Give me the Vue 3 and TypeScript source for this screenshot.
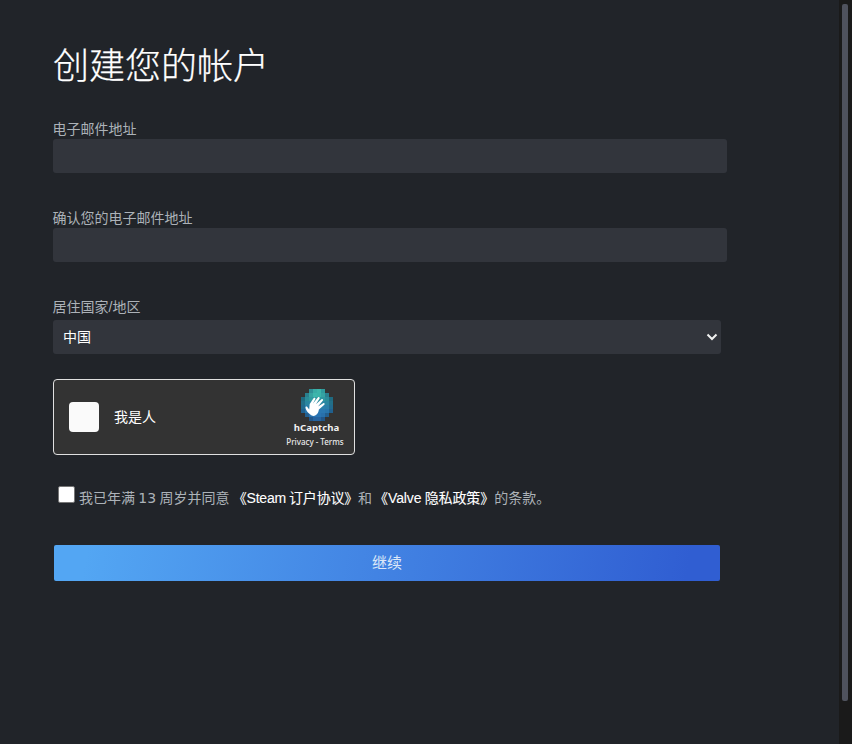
<script setup lang="ts">
const rows: string[][] = [
  ['', '', '#2f8f96', '#38aca6', '#3cb4aa', '#2f9a9c', '', ''],
  ['', '#2a7f8e', '#35a3a2', '#3cb6ac', '#3ab3aa', '#34a3a2', '#2a7f8e', ''],
  ['#1f6a80', '#2b8c98', '#309aa0', '#2f9aa0', '#2f98a0', '#2f98a0', '#2b8c98', '#1f6a80'],
  ['#226f88', '#2a86a0', '#2a88a4', '#2a88a4', '#2a88a4', '#2a88a4', '#2a86a0', '#226f88'],
  ['#216a8e', '#2a7ea8', '#2a80ac', '#2a80ac', '#2a80ac', '#2a80ac', '#2a7ea8', '#216a8e'],
  ['#20608e', '#2875ad', '#2a78b2', '#2a78b2', '#2a78b2', '#2a78b2', '#2875ad', '#20608e'],
  ['', '#235f90', '#2870ac', '#2a74b2', '#2a74b2', '#2870ac', '#235f90', ''],
  ['', '', '#21568a', '#2563a0', '#2563a0', '#21568a', '', ''],
]
const cells = rows.flatMap((r, y) => r.map((fill, x) => ({ x: x * 4, y: y * 4, fill }))).filter((c) => c.fill)
</script>

<template>
  <div class="page">
    <main class="content">
      <h1 class="title">创建您的帐户</h1>

      <label class="field">
        <span class="label">电子邮件地址</span>
        <input class="input" type="text" />
      </label>

      <label class="field second">
        <span class="label">确认您的电子邮件地址</span>
        <input class="input" type="text" />
      </label>

      <label class="field third">
        <span class="label">居住国家/地区</span>
        <div class="select">
          <span>中国</span>
          <svg width="12" height="8" viewBox="0 0 12 8">
            <path d="M1.5 1.5 6 6l4.5-4.5" fill="none" stroke="#f0f0f0" stroke-width="2" />
          </svg>
        </div>
      </label>

      <div class="captcha">
        <div class="box"></div>
        <span class="human">我是人</span>
        <div class="brand">
          <svg class="logo" width="32" height="32" viewBox="0 0 32 32" shape-rendering="crispEdges">
            <rect v-for="c in cells" :key="c.x + '-' + c.y" :x="c.x" :y="c.y" width="4" height="4" :fill="c.fill" />
            <path
              shape-rendering="auto"
              d="M9.5 25.5c-2.6-1.4-4.2-4-5-6.6-.3-1.1 1.1-1.8 1.8-.8l1.9 2.4.5-5.6 4-5.8c.7-1 2.2-.1 1.7 1l-2.4 4.4 5-6.2c.8-.9 2.2.1 1.6 1.2l-3.7 5.8 5.6-5c.9-.8 2.1.4 1.3 1.4l-4.8 5.8 5.2-3.2c1.1-.7 2 .7 1.1 1.5l-5.4 4.8c-.5 2.9-1.3 4.4-2.9 5.4-1.9 1.2-3.6 1.2-5.5.1z"
              fill="#fff"
            />
          </svg>
          <span class="brand-name">hCaptcha</span>
          <span class="brand-links">Privacy - Terms</span>
        </div>
      </div>

      <div class="agree">
        <span class="check"></span>
        <span class="agree-text">我已年满 <span class="num">13</span> 周岁并同意 <span class="link">《Steam 订户协议》</span>和<span class="link second-link">《Valve 隐私政策》</span>的条款。</span>
      </div>

      <button class="continue" type="button">继续</button>
    </main>
    <aside class="scrollbar"><div class="thumb"></div></aside>
  </div>
</template>

<style>
html, body { margin: 0; background: #212429; overflow: hidden; }
</style>

<style scoped>
.page {
  display: flex;
  height: 744px;
  background: #212429;
  font-family: "Liberation Sans", "Noto Sans CJK SC", sans-serif;
  color: #acb2b8;
}
.content {
  flex: 1;
  padding: 43px 0 0 53px;
  box-sizing: border-box;
}
.title {
  margin: 0;
  height: 48px;
  font-size: 36px;
  line-height: 48px;
  font-weight: 300;
  -webkit-text-stroke: 0.25px #fff;
  color: #fff;
}
.field { display: block; width: 674px; margin-top: 29px; }
.field.second { margin-top: 36px; }
.field.third { margin-top: 36px; }
.label { display: block; font-size: 14px; line-height: 19px; margin-left: -0.5px; }
.input {
  display: block;
  width: 100%;
  height: 34px;
  box-sizing: border-box;
  border: 0;
  padding: 0 10px;
  border-radius: 3px;
  background: #32353c;
  margin: 0;
}
.select {
  width: 668px;
  height: 34px;
  margin-top: 3px;
  box-sizing: border-box;
  padding: 0 3px 2px 10px;
  display: flex;
  align-items: center;
  justify-content: space-between;
  border-radius: 3px;
  background: #32353c;
  color: #fff;
  font-size: 14px;
}
.select svg { margin: 2px 0 0; }
.captcha {
  width: 302px;
  height: 76px;
  margin-top: 25px;
  box-sizing: border-box;
  border: 1px solid #e0e0e0;
  border-radius: 4px;
  background: #333;
  display: flex;
  align-items: center;
  padding: 0 10px 0 15px;
}
.box {
  width: 30px;
  height: 30px;
  border-radius: 4px;
  background: #fafafa;
}
.human { margin-left: 15px; color: #fff; font-size: 14px; line-height: 20px; flex: 1; }
.brand {
  display: flex;
  flex-direction: column;
  align-items: center;
  width: 58px;
  margin-top: 2px;
}
.logo { display: block; margin-left: 4px; }
.brand-name { margin: 0 0 0 3px; font: 700 9.6px/14px "Noto Sans", sans-serif; color: #f0f0f0; }
.brand-links { font: 500 8px/13px "Noto Sans", sans-serif; color: #e8e8e8; white-space: nowrap; }
.agree {
  display: flex;
  align-items: flex-start;
  margin-top: 31px;
  padding-left: 5px;
  font-size: 14px;
  line-height: 20px;
}
.check {
  width: 17px;
  height: 17px;
  box-sizing: border-box;
  border: 1px solid #767676;
  border-radius: 2px;
  background: #fff;
  margin-right: 4px;
}
.agree-text { margin-top: 2px; white-space: nowrap; word-spacing: -0.6px; }
.num { font-family: "DejaVu Sans", sans-serif; }
.link { color: #fff; letter-spacing: -0.2px; -webkit-text-stroke: 0.1px #fff; }
.second-link { margin-left: 2px; letter-spacing: -0.1px; }
.continue {
  display: block;
  width: 666px;
  height: 36px;
  margin: 37px 0 0 1px;
  border: 0;
  border-radius: 2px;
  background: linear-gradient(100deg, #53a6f3 5%, #305ed2 95%);
  color: #dce8f8;
  font-family: inherit;
  font-size: 15px;
  padding: 0 0 4px;
}
.scrollbar {
  flex: none;
  width: 13px;
  background: #1a1a1a;
  padding: 4px 4px 0 3px;
  box-sizing: border-box;
}
.thumb {
  height: 697px;
  background: #4f525d;
  border-radius: 2px;
}
</style>
